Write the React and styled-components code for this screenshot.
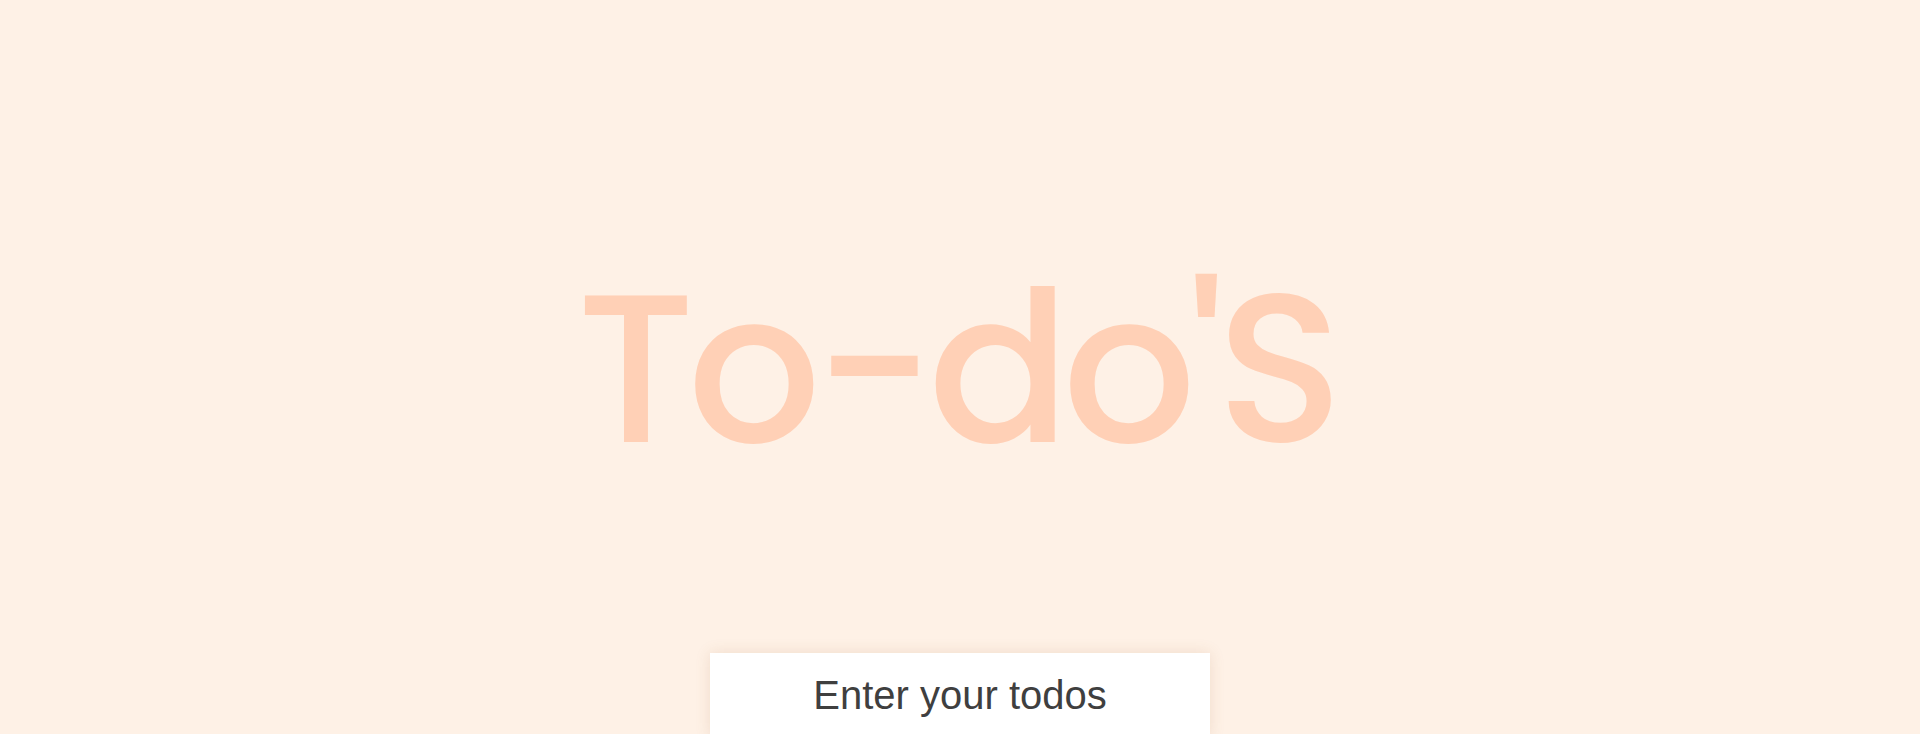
import React, { useState } from 'react'
import styled, { createGlobalStyle } from 'styled-components'

const GlobalStyle = createGlobalStyle`
  body {
    margin: 0;
    background-color: #FEF1E6;
    font-family: "Liberation Sans", Arial, sans-serif;
  }
`

const Page = styled.div`
  display: flex;
  flex-direction: column;
  align-items: center;
  padding-top: 264px;
`

const Title = styled.h1`
  margin: 0 8px 0 0;
  font-family: "Poppins", Inter, "Noto Sans", sans-serif;
  font-size: 210px;
  font-weight: 500;
  line-height: 1;
  letter-spacing: -8px;
  color: #FFD0B6;
  white-space: nowrap;
`

const TodoInput = styled.input`
  margin-top: 179px;
  width: 500px;
  height: 84px;
  box-sizing: border-box;
  border: none;
  outline: none;
  background-color: #FFFFFF;
  box-shadow: 0px 0px 14px 0px rgba(170, 110, 60, 0.16);
  font-family: "Liberation Sans", Arial, sans-serif;
  font-size: 40px;
  text-align: center;
  color: #3f3f3f;

  &::placeholder {
    color: #3f3f3f;
  }
`

export default function App() {
  const [todo, setTodo] = useState('')

  return (
    <>
      <GlobalStyle />
      <Page>
        <Title>To-do'S</Title>
        <TodoInput
          value={todo}
          onChange={(e) => setTodo(e.target.value)}
          placeholder="Enter your todos"
        />
      </Page>
    </>
  )
}
